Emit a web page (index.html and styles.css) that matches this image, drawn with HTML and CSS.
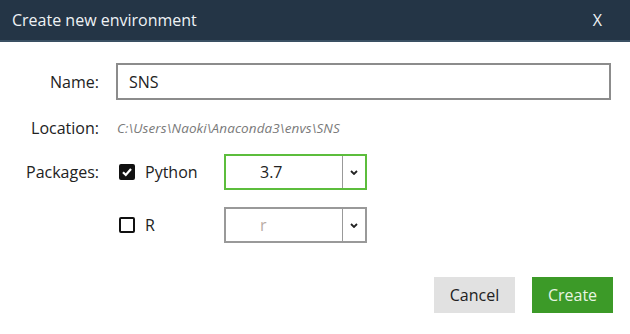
FILE: index.html
```html
<!DOCTYPE html>
<html lang="en">
<head>
    <meta charset="UTF-8">
    <title>Create new environment</title>
    <link rel="stylesheet" href="styles.css">
</head>
<body>
    <div class="dialog">
        <header class="dialog-header">
            <span class="dialog-title">Create new environment</span>
            <span class="dialog-close">X</span>
        </header>

        <div class="dialog-body">
            <div class="form-row name-row">
                <label class="form-label" for="envName">Name:</label>
                <input class="text-input" id="envName" type="text" value="SNS">
            </div>

            <div class="form-row location-row">
                <span class="form-label">Location:</span>
                <span class="location-path">C:\Users\Naoki\Anaconda3\envs\SNS</span>
            </div>

            <div class="form-row packages-row">
                <span class="form-label">Packages:</span>
                <div class="package-list">
                    <div class="package">
                        <span class="checkbox checked">
                            <svg width="12" height="12" viewBox="0 0 12 12"><polyline points="2,6.2 4.8,9 10,3" fill="none" stroke="#fff" stroke-width="2.2"/></svg>
                        </span>
                        <span class="package-name">Python</span>
                        <div class="select active">
                            <span class="select-value">3.7</span>
                            <span class="select-arrow">
                                <svg width="8" height="5" viewBox="0 0 8 5"><polyline points="1,1 4,4 7,1" fill="none" stroke="#222" stroke-width="1.8"/></svg>
                            </span>
                        </div>
                    </div>
                    <div class="package">
                        <span class="checkbox"></span>
                        <span class="package-name">R</span>
                        <div class="select">
                            <span class="select-value muted">r</span>
                            <span class="select-arrow">
                                <svg width="8" height="5" viewBox="0 0 8 5"><polyline points="1,1 4,4 7,1" fill="none" stroke="#222" stroke-width="1.8"/></svg>
                            </span>
                        </div>
                    </div>
                </div>
            </div>

            <div class="dialog-actions">
                <button class="btn btn-cancel">Cancel</button>
                <button class="btn btn-create">Create</button>
            </div>
        </div>
    </div>
</body>
</html>
```

FILE: styles.css
```css
body {
    margin: 0;
    font-family: 'Open Sans', 'Noto Sans', sans-serif;
    background-color: #fff;
    color: #222;
}
.dialog {
    width: 630px;
    height: 334px;
    background-color: #fff;
}
.dialog-header {
    display: flex;
    justify-content: space-between;
    align-items: center;
    height: 40px;
    padding: 0 28px 0 12px;
    background-color: #243546;
    border-bottom: 2px solid #3a5063;
    color: #eef2f5;
    font-size: 16px;
}
.dialog-close {
    font-size: 16px;
}
.dialog-body {
    padding: 21px 19px 0 0;
}
.form-row {
    display: grid;
    grid-template-columns: 99px 1fr;
    column-gap: 17px;
    align-items: center;
}
.form-label {
    text-align: right;
    font-size: 16px;
}
.name-row {
    height: 37px;
}
.text-input {
    box-sizing: border-box;
    height: 37px;
    width: 100%;
    padding: 0 11px;
    border: 2px solid #8c8c8c;
    font-family: inherit;
    font-size: 16px;
    color: #222;
    outline: none;
}
.location-row {
    height: 20px;
    margin-top: 17px;
}
.location-path {
    font-size: 13.5px;
    font-style: italic;
    color: #7a7a7a;
    padding-left: 1px;
    letter-spacing: 0.1px;
}
.packages-row {
    margin-top: 17px;
    align-items: start;
}
.packages-row .form-label {
    line-height: 36px;
}
.package-list {
    display: flex;
    flex-direction: column;
    gap: 17px;
}
.package {
    display: grid;
    grid-template-columns: 26px 82px 143px;
    align-items: center;
    height: 36px;
    padding-left: 3px;
}
.checkbox {
    box-sizing: border-box;
    width: 16px;
    height: 16px;
    border: 2px solid #111;
    border-radius: 2px;
    display: flex;
    align-items: center;
    justify-content: center;
}
.checkbox.checked {
    background-color: #111;
}
.package-name {
    font-size: 16px;
}
.select {
    box-sizing: border-box;
    display: flex;
    width: 143px;
    height: 36px;
    border: 2px solid #999;
    margin-left: -3px;
}
.select.active {
    border-color: #5cbd3c;
}
.select-value {
    flex: 1;
    padding-left: 34px;
    font-size: 16px;
    line-height: 32px;
}
.select-value.muted {
    color: #b9aba4;
}
.select-arrow {
    width: 22px;
    border-left: 1px solid #999;
    display: flex;
    align-items: center;
    justify-content: center;
}
.dialog-actions {
    display: flex;
    justify-content: flex-end;
    gap: 17px;
    margin-top: 34px;
}
.btn {
    width: 81px;
    height: 36px;
    border: none;
    font-family: inherit;
    font-size: 16px;
    cursor: pointer;
}
.btn-cancel {
    background-color: #e1e1e1;
    color: #222;
}
.btn-create {
    background-color: #3c9a28;
    color: #e8f4e2;
    margin-right: -2px;
}
```
